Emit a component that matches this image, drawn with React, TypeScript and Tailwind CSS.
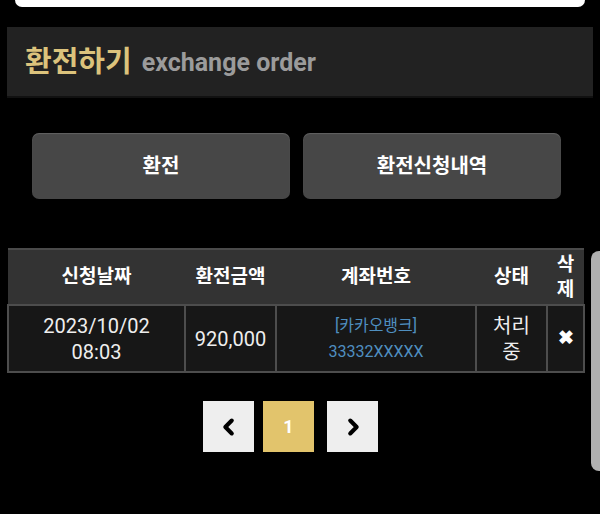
import React from 'react';

const font = { fontFamily: '"Roboto", "Noto Sans CJK KR", sans-serif' };

const headers = ['신청날짜', '환전금액', '계좌번호', '상태'];

const App = () => {
  return (
    <div className="relative w-[600px] h-[514px] bg-black overflow-hidden" style={font}>
      {/* top white strip */}
      <div className="mx-[15px] h-[7px] bg-white rounded-b-[14px]" />

      {/* title */}
      <div className="mt-[20px] mx-[7px] h-[71px] bg-[#222222] border-b-2 border-[#111111] flex items-center pl-[18px] pt-[3px]">
        <span className="text-[29px] font-bold text-[#dcc37c]">환전하기</span>
        <span className="ml-[10px] text-[25px] font-bold text-[#9b9b9b]">exchange order</span>
      </div>

      {/* buttons */}
      <div className="mt-[35px] flex gap-[13px] pl-[32px]">
        <button className="w-[258px] h-[66px] rounded-[7px] bg-[#474747] text-white text-[20px] font-bold shadow-[inset_0_1px_1px_rgba(255,255,255,0.15)]">
          환전
        </button>
        <button className="w-[258px] h-[66px] rounded-[7px] bg-[#474747] text-white text-[20px] font-bold shadow-[inset_0_1px_1px_rgba(255,255,255,0.15)]">
          환전신청내역
        </button>
      </div>

      {/* table */}
      <div className="mt-[49px] ml-[7px] w-[576px]">
        <table className="w-full border-collapse table-fixed">
          <colgroup>
            <col className="w-[177px]" />
            <col className="w-[91px]" />
            <col className="w-[200px]" />
            <col className="w-[71px]" />
            <col className="w-[37px]" />
          </colgroup>
          <thead>
            <tr className="h-[56px] bg-[#333333] border-t-2 border-[#4a4a4a]">
              {headers.map((h) => (
                <th key={h} className="text-white text-[19px] font-bold text-center">
                  {h}
                </th>
              ))}
              <th className="text-white text-[19px] font-bold text-center leading-[25px]">
                삭<br />제
              </th>
            </tr>
          </thead>
          <tbody>
            <tr className="h-[67px] bg-[#171717] text-[#eeeeee] text-[20px]">
              <td className="border-2 border-[#4d4d4d] text-center leading-[26px]">
                2023/10/02
                <br />
                08:03
              </td>
              <td className="border-2 border-[#4d4d4d] text-center">920,000</td>
              <td className="border-2 border-[#4d4d4d] text-center text-[#4f8fc0] text-[16px] leading-[26px]">
                [카카오뱅크]
                <br />
                33332XXXXX
              </td>
              <td className="border-2 border-[#4d4d4d] text-center leading-[26px]">
                처리
                <br />중
              </td>
              <td className="border-2 border-[#4d4d4d] text-center text-white text-[19px] font-bold">✖</td>
            </tr>
          </tbody>
        </table>
      </div>

      {/* pagination */}
      <div className="mt-[28px] flex items-center pl-[203px]">
        <button className="w-[51px] h-[51px] bg-[#eeeeee] flex items-center justify-center">
          <svg width="22" height="22" viewBox="0 0 24 24" fill="none" stroke="#000" strokeWidth="4.5" strokeLinecap="round" strokeLinejoin="round">
            <path d="M15 5l-7 7 7 7" />
          </svg>
        </button>
        <button className="ml-[9px] w-[51px] h-[51px] bg-[#e2c46c] text-white text-[18px] font-bold">1</button>
        <button className="ml-[13px] w-[51px] h-[51px] bg-[#eeeeee] flex items-center justify-center">
          <svg width="22" height="22" viewBox="0 0 24 24" fill="none" stroke="#000" strokeWidth="4.5" strokeLinecap="round" strokeLinejoin="round">
            <path d="M9 5l7 7-7 7" />
          </svg>
        </button>
      </div>

      {/* side scrollbar panel */}
      <div className="absolute left-[591px] top-[251px] w-[20px] h-[220px] rounded-[8px] bg-[#b0b0b0]" />
    </div>
  );
};

export default App;
